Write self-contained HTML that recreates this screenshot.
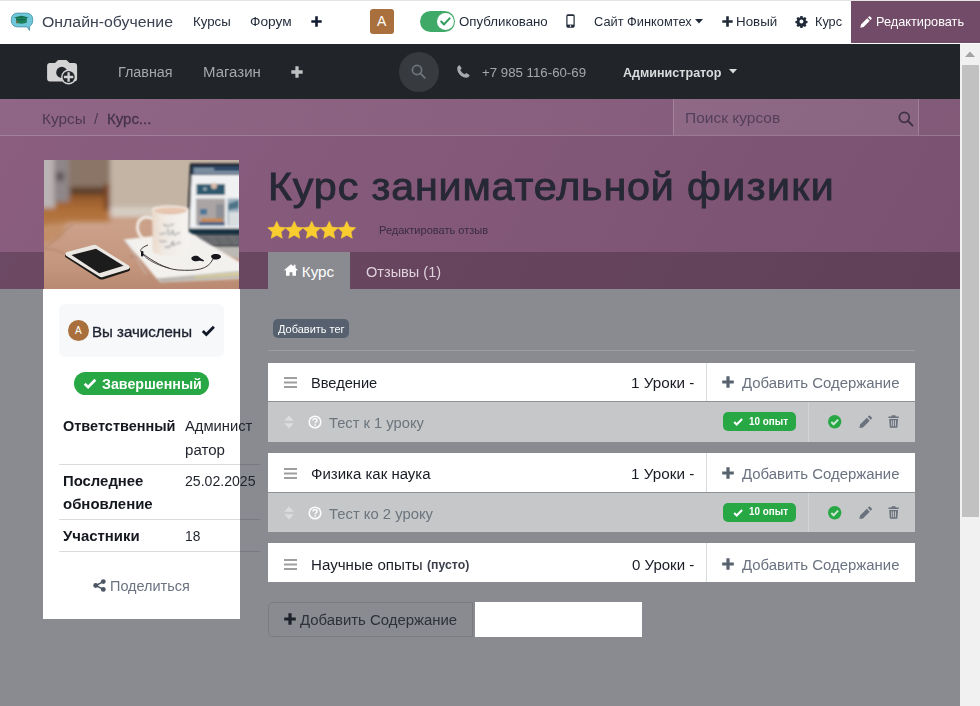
<!DOCTYPE html>
<html lang="ru">
<head>
<meta charset="utf-8">
<title>Курс занимательной физики</title>
<style>
*{box-sizing:border-box;margin:0;padding:0}
html,body{width:980px;height:706px;overflow:hidden;background:#898b91;font-family:"Liberation Sans",sans-serif;}
#root{position:relative;width:980px;height:706px;overflow:hidden;background:#898b91}
.abs{position:absolute}
.t{position:absolute;white-space:nowrap;line-height:1;}
svg{position:absolute;display:block;overflow:visible}
/* top bar */
#topbar{position:absolute;left:0;top:0;width:980px;height:44px;background:#fff;border-top:1px solid #e3e3e3}
#editbtn{position:absolute;left:851px;top:1px;width:129px;height:42px;background:#714b67}
/* dark nav */
#nav{position:absolute;left:0;top:44px;width:960px;height:55px;background:#212529}
/* scrollbar */
#sb{position:absolute;left:960px;top:44px;width:20px;height:662px;background:#f1f1f1}
#sbthumb{position:absolute;left:2px;top:21px;width:16.600px;height:452px;background:#c1c1c1}
/* header */
#hdr{position:absolute;left:0;top:99px;width:960px;height:190px;background:linear-gradient(120deg,#8b5e80 0%,#7a5170 100%)}
#crumb{position:absolute;left:0;top:0;width:960px;height:37px;background:rgba(255,255,255,.05);border-bottom:1px solid rgba(255,255,255,.18)}
#search{position:absolute;left:673px;top:0;width:246px;height:36px;background:rgba(255,255,255,.07);border-left:1px solid rgba(255,255,255,.18);border-right:1px solid rgba(255,255,255,.18)}
#tabs{position:absolute;left:0;top:153px;width:960px;height:37px;background:rgba(0,0,0,.21)}
#tab1{position:absolute;left:268px;top:0;width:82px;height:37px;background:#898b91}
/* sidebar */
#side{position:absolute;left:43px;top:289px;width:197px;height:330px;background:#fff}
</style>
</head>
<body>
<div id="root">
  <div id="topbar"></div>
  <div id="editbtn"></div>
  <!-- elearning app icon -->
  <svg style="left:11px;top:12px" width="23" height="20" viewBox="0 0 23 20">
    <path d="M6.200 1.100h9.600a5.900 5.900 0 0 1 5.900 5.900v2a5.900 5.900 0 0 1-2.900 5.100l-.400 4.400-2.100-3.600h-10.100a5.900 5.900 0 0 1-5.900-5.900v-2a5.900 5.900 0 0 1 5.900-5.900z" fill="#6fc7da" stroke="#468fa3" stroke-width=".800"/>
    <path d="M10.400 3.700l7.600 1.700-7.600 1.700-7.600-1.700z" fill="#12704c"/>
    <path d="M5.100 6.300l5.300 1 5.400-1v4.300c-1.500 1.500-9.200 1.500-10.700 0z" fill="#1c8159"/>
    <path d="M5.100 6.300l5.300 1 5.400-1v1.300l-5.400 1-5.300-1z" fill="#10694a"/>
    <rect x="5.200" y="8.800" width="1.800" height="2.400" fill="#7a6a3c"/>
  </svg>
  <div class="t" id="t_brand" style="left:41.80px;top:13.63px;font-size:15.2px;color:#3b4252;letter-spacing:0px;transform-origin:0 0;transform:scaleX(1.0440)">Онлайн-обучение</div>
  <div class="t" id="t_kursy" style="left:193.20px;top:14.83px;font-size:13.2px;color:#1f2937;letter-spacing:0px;transform-origin:0 0;transform:scaleX(1.0039)">Курсы</div>
  <div class="t" id="t_forum" style="left:249.80px;top:14.83px;font-size:13.2px;color:#1f2937;letter-spacing:0px;transform-origin:0 0;transform:scaleX(1.0386)">Форум</div>
  <svg style="left:311px;top:16px" width="11" height="11" viewBox="0 0 11 11"><path d="M4.200 0.300h2.600v3.900h3.900v2.600h-3.900v3.900h-2.600v-3.900h-3.900v-2.600h3.900z" fill="#111c33"/></svg>
  <div class="abs" style="left:370px;top:9px;width:24px;height:24.500px;border-radius:3px;background:#a9703d"></div>
  <div class="t" id="t_avA" style="left:377px;top:14px;font-size:14px;color:#fff">A</div>
  <div class="abs" style="left:420px;top:11px;width:35px;height:21px;border-radius:11px;background:#3fa968"></div>
  <div class="abs" style="left:437px;top:13px;width:17px;height:17px;border-radius:9px;background:#fff"></div>
  <svg style="left:440px;top:17px" width="11" height="9" viewBox="0 0 11 9"><path d="M1.200 4.600l2.800 2.800 5.600-6" fill="none" stroke="#2f9e5f" stroke-width="2.100" stroke-linecap="round" stroke-linejoin="round"/></svg>
  <div class="t" id="t_pub" style="left:459.20px;top:14.83px;font-size:13.2px;color:#1f2937;letter-spacing:0px;transform-origin:0 0;transform:scaleX(1.0057)">Опубликовано</div>
  <svg style="left:566px;top:14px" width="9" height="14" viewBox="0 0 9 14"><rect x="0.300" y="0.300" width="8.400" height="13.400" rx="1.600" fill="#1f2937"/><rect x="1.500" y="2" width="6" height="8.600" fill="#fff"/><circle cx="4.500" cy="12.100" r="0.800" fill="#fff"/></svg>
  <div class="t" id="t_site" style="left:593.80px;top:14.83px;font-size:13.2px;color:#1f2937;letter-spacing:0px;transform-origin:0 0;transform:scaleX(0.9718)">Сайт Финкомтех</div>
  <svg style="left:695px;top:19px" width="8" height="5" viewBox="0 0 8 5"><path d="M0 0h8l-4 4.600z" fill="#1f2937"/></svg>
  <svg style="left:722px;top:16px" width="11" height="11" viewBox="0 0 11 11"><path d="M4.200 0.300h2.600v3.900h3.900v2.600h-3.900v3.900h-2.600v-3.900h-3.900v-2.600h3.900z" fill="#1f2937"/></svg>
  <div class="t" id="t_new" style="left:735.80px;top:14.83px;font-size:13.2px;color:#1f2937;letter-spacing:0px;transform-origin:0 0;transform:scaleX(1.0130)">Новый</div>
  <svg style="left:796.300px;top:16.200px" width="10.900" height="10.900" viewBox="0 0 24 24"><path fill="#1f2937" fill-rule="evenodd" d="M9.600 0h4.800l.6 3.300 1.900.8 2.800-1.900 3.400 3.400-1.900 2.800.8 1.900 3.300.6v4.800l-3.300.6-.8 1.900 1.900 2.800-3.400 3.400-2.800-1.900-1.900.8-.6 3.300h-4.800l-.6-3.300-1.900-.8-2.800 1.900-3.400-3.400 1.900-2.800-.8-1.900-3.300-.6v-4.800l3.300-.6.8-1.900-1.900-2.800 3.400-3.400 2.800 1.900 1.900-.8zM12 7.600a4.400 4.400 0 1 0 0 8.800 4.400 4.400 0 0 0 0-8.800z"/></svg>
  <div class="t" id="t_kurs" style="left:814.80px;top:14.83px;font-size:13.2px;color:#1f2937;letter-spacing:0px;transform-origin:0 0;transform:scaleX(0.9643)">Курс</div>
  <svg style="left:860px;top:15.500px" width="12" height="12" viewBox="0 0 13 13"><path d="M0.300 12.700l0.800-3.600 6.700-6.700 2.800 2.800-6.700 6.700zM8.700 1.500l1-1a0.900 0.900 0 0 1 1.200 0l1.600 1.600a0.900 0.900 0 0 1 0 1.200l-1 1z" fill="#fff"/></svg>
  <div class="t" id="t_edit" style="left:875.80px;top:14.83px;font-size:13.2px;color:#fff;letter-spacing:0px;transform-origin:0 0;transform:scaleX(0.9671)">Редактировать</div>
  <div id="nav"></div>
  <!-- camera logo -->
  <svg style="left:47px;top:60px" width="31" height="26" viewBox="0 0 31 26">
    <path d="M3 3h5l2.600-2.600a1.400 1.400 0 0 1 1-.4h7.400a1.400 1.400 0 0 1 1 .4l2.600 2.600h4.600a2.900 2.900 0 0 1 2.900 2.900v12.700a2.900 2.900 0 0 1-2.900 2.900h-24.200a2.900 2.900 0 0 1-2.900-2.900v-12.700a2.900 2.900 0 0 1 2.900-2.900z" fill="#d3d3d4"/>
    <circle cx="14.800" cy="12.400" r="5.600" fill="#212529"/>
    <circle cx="21.600" cy="17" r="7.500" fill="#d3d3d4"/>
    <circle cx="21.600" cy="17" r="6.100" fill="#212529"/>
    <path d="M21.600 12.300v9.400M16.900 17h9.400" stroke="#d3d3d4" stroke-width="2.300" fill="none"/>
  </svg>
  <div class="t" id="t_home" style="left:117.80px;top:63.63px;font-size:15.2px;color:#a4a7ab;letter-spacing:0px;transform-origin:0 0;transform:scaleX(0.9429)">Главная</div>
  <div class="t" id="t_shop" style="left:203.20px;top:63.63px;font-size:15.2px;color:#a4a7ab;letter-spacing:0px;transform-origin:0 0;transform:scaleX(0.9861)">Магазин</div>
  <svg style="left:291px;top:66px" width="12" height="12" viewBox="0 0 11 11"><path d="M4 0.300h3v3.700h3.700v3h-3.700v3.700h-3v-3.700h-3.700v-3h3.700z" fill="#bfc1c3"/></svg>
  <div class="abs" style="left:399px;top:51.500px;width:40px;height:40px;border-radius:20px;background:#373b40"></div>
  <svg style="left:411px;top:64px" width="15" height="15" viewBox="0 0 15 15"><circle cx="6" cy="6" r="4.600" fill="none" stroke="#6f747a" stroke-width="1.700"/><path d="M9.400 9.400l4.400 4.400" stroke="#6f747a" stroke-width="1.900" stroke-linecap="round"/></svg>
  <svg style="left:457px;top:65px" width="13" height="13" viewBox="0 0 13 13"><path d="M2.600 0.300l2.100 2.900-1.400 1.700c.9 1.900 2.300 3.300 4.400 4.400l1.700-1.400 2.900 2.100c.3.300.3.700.1 1-0.700 1-1.700 1.700-2.900 1.700-4.700 0-9.300-4.600-9.300-9.300 0-1.200.7-2.200 1.700-2.900.2-.2.500-.3.700-.2z" fill="#a8abae"/></svg>
  <div class="t" id="t_phone" style="left:482.20px;top:65.83px;font-size:13.2px;color:#a4a7ab;letter-spacing:0px;transform-origin:0 0;transform:scaleX(1.0050)">+7 985 116-60-69</div>
  <div class="t" id="t_admin" style="left:622.60px;top:66.00px;font-size:13px;font-weight:bold;color:#d9dbdd;letter-spacing:0px;transform-origin:0 0;transform:scaleX(0.9657)">Администратор</div>
  <svg style="left:729px;top:69px" width="8" height="5" viewBox="0 0 8 5"><path d="M0 0h8l-4 4.400z" fill="#d9dbdd"/></svg>
  <div id="sb"><div id="sbthumb"></div><svg style="left:5px;top:7px" width="10" height="6" viewBox="0 0 10 6"><path d="M0 6l5-5.600 5 5.600z" fill="#a3a3a3"/></svg></div>
  <div id="hdr">
    <div id="crumb"></div>
    <div id="search"></div>
    <div id="tabs"><div id="tab1"></div></div>
  </div>
  <div class="t" id="t_bc1" style="left:41.80px;top:110.63px;font-size:15.2px;color:#4d3a50;letter-spacing:0px;transform-origin:0 0;transform:scaleX(1.0135)">Курсы</div>
  <div class="t" id="t_bc2" style="left:93.60px;top:110.63px;font-size:15.2px;color:#4d3a50;letter-spacing:0px;transform-origin:0 0;transform:scaleX(0.9938)">/</div>
  <div class="t" id="t_bc3" style="-webkit-text-stroke:0.300px #45334a;left:106.80px;top:110.63px;font-size:15.2px;color:#45334a;letter-spacing:0px;transform-origin:0 0;transform:scaleX(0.9886)">Курс...</div>
  <div class="t" id="t_srch" style="left:684.60px;top:110.43px;font-size:15.2px;color:#543f5a;letter-spacing:0px;transform-origin:0 0;transform:scaleX(1.0202)">Поиск курсов</div>
  <svg style="left:898px;top:111px" width="16" height="16" viewBox="0 0 16 16"><circle cx="6.300" cy="6.300" r="5" fill="none" stroke="#3e3045" stroke-width="1.700"/><path d="M10 10l4.600 4.600" stroke="#3e3045" stroke-width="1.900" stroke-linecap="round"/></svg>
  <div class="t" id="t_title" style="-webkit-text-stroke:0.850px #262835;paint-order:stroke fill;left:267.80px;top:167.36px;font-size:39.5px;color:#262835;letter-spacing:0.8px;transform-origin:0 0;transform:scaleX(1.0443)">Курс занимательной</div>
  <div class="t" id="t_title2" style="-webkit-text-stroke:0.850px #262835;paint-order:stroke fill;left:686.80px;top:167.36px;font-size:39.5px;color:#262835;letter-spacing:1.4px;transform-origin:0 0;transform:scaleX(1.0399)">физики</div>
  <svg id="stars" style="left:268px;top:221px" width="88" height="18" viewBox="0 0 88 18">
    <defs><path id="st" d="M8.75 0.30L11.40 6.06L17.69 6.80L13.03 11.09L14.28 17.30L8.75 14.20L3.22 17.30L4.47 11.09L-0.19 6.80L6.10 6.06z" stroke-linejoin="round"/></defs>
    <use href="#st" x="0" fill="#f9cc30" stroke="#f9cc30" stroke-width=".600"/><use href="#st" x="17.500" fill="#f9cc30" stroke="#f9cc30" stroke-width=".600"/><use href="#st" x="35" fill="#f9cc30" stroke="#f9cc30" stroke-width=".600"/><use href="#st" x="52.500" fill="#f9cc30" stroke="#f9cc30" stroke-width=".600"/><use href="#st" x="70" fill="#f9cc30" stroke="#f9cc30" stroke-width=".600"/>
  </svg>
  <div class="t" id="t_rev" style="left:378.80px;top:224.56px;font-size:11.15px;color:#3a2d40;letter-spacing:0px;transform-origin:0 0;transform:scaleX(0.9907)">Редактировать отзыв</div>
  <svg style="left:284px;top:264px" width="14" height="12" viewBox="0 0 14 12"><path d="M7 0.200l-6.800 5.700.8.900 1-.8v5.800h3.600v-3.600h2.800v3.600h3.600v-5.800l1 .8.800-.9-2.300-1.900v-3.200h-1.800v1.700z" fill="#fff"/></svg>
  <div class="t" id="t_tab1" style="left:301.80px;top:263.63px;font-size:15.2px;color:#fff;letter-spacing:0px;transform-origin:0 0;transform:scaleX(1.0000)">Курс</div>
  <div class="t" id="t_tab2" style="left:365.60px;top:263.63px;font-size:15.2px;color:#dfd2dc;letter-spacing:0px;transform-origin:0 0;transform:scaleX(0.9573)">Отзывы (1)</div>
  <div id="side"></div>
  <!-- course image -->
  <svg id="photo" style="left:44px;top:160px" width="195" height="129" viewBox="0 0 195 129">
    <defs>
      <filter id="b1" x="-10%" y="-10%" width="120%" height="120%"><feGaussianBlur stdDeviation="2.400"/></filter>
      <filter id="b2" x="-10%" y="-10%" width="120%" height="120%"><feGaussianBlur stdDeviation="0.800"/></filter>
      <filter id="b3" x="-10%" y="-10%" width="120%" height="120%"><feGaussianBlur stdDeviation="0.400"/></filter>
      <filter id="b4" x="-10%" y="-10%" width="120%" height="120%"><feGaussianBlur stdDeviation="1.300"/></filter>
      <clipPath id="pc"><rect x="0" y="0" width="195" height="129"/></clipPath>
      <linearGradient id="blk" x1="0" y1="0" x2="0" y2="1"><stop offset="0" stop-color="#cca28a"/><stop offset=".55" stop-color="#c4967e"/><stop offset="1" stop-color="#b4846b"/></linearGradient>
      <linearGradient id="mug" x1="0" y1="0" x2="1" y2="0"><stop offset="0" stop-color="#ead9ca"/><stop offset=".3" stop-color="#f0e9e2"/><stop offset="1" stop-color="#f5f3f1"/></linearGradient>
      <linearGradient id="flr" x1="0" y1="0" x2="0" y2="1"><stop offset="0" stop-color="#8f552a"/><stop offset=".4" stop-color="#ad6c35"/><stop offset="1" stop-color="#b9804f"/></linearGradient>
    </defs>
    <g clip-path="url(#pc)">
      <rect x="0" y="0" width="195" height="129" fill="#c4b5a5"/>
      <!-- blurred background -->
      <g filter="url(#b1)">
        <rect x="24" y="-6" width="44" height="40" fill="#8a7566"/>
        <rect x="26" y="27" width="36" height="9" fill="#5f402a"/>
        <path d="M-6 44l32-9h42v34h-74z" fill="url(#flr)"/>
        <rect x="-6" y="-6" width="17" height="54" fill="#bab4b4"/>
        <rect x="10" y="-6" width="15" height="48" fill="#8e8688"/>
        <rect x="12" y="12" width="8" height="9" fill="#5e5558"/>
        <rect x="60" y="24" width="6" height="26" fill="#7a4523"/>
        <rect x="66" y="-6" width="140" height="56" fill="#c3b4a4"/>
        <rect x="66" y="47" width="60" height="11" fill="#d6cdc3"/>
        <rect x="66" y="57" width="50" height="10" fill="#c89c83"/>
      </g>
      <!-- blanket -->
      <g filter="url(#b1)">
        <path d="M-8 68l34-6 76 0 102 8v70h-212z" fill="url(#blk)"/>
        <path d="M-6 66l30-4-8 16-22 8z" fill="#bf8a5e" opacity=".750"/>
      </g>
      <g filter="url(#b2)" fill="none" stroke="#a4745c" stroke-width="0.900" opacity=".800">
        <path d="M0 89l29-25"/><path d="M0 89c8 0 14 1 21 5"/><path d="M86 96l12 2"/>
      </g>
      <!-- laptop -->
      <g filter="url(#b2)">
        <path d="M146 3.500h52v72h-55.500z" fill="#16191f"/>
        <path d="M148 6h50v9h-50.400z" fill="#2e4a66"/>
        <path d="M150 8.500h20v1.600h-20zM150 11.500h46v1.400h-46z" fill="#a9bccb"/>
        <path d="M147.600 15h50.400v55h-52.800z" fill="#f0f1f2"/>
        <rect x="152.500" y="24" width="28.500" height="11" fill="#2f596d"/>
        <circle cx="170" cy="26" r="3" fill="#d9b9a8"/>
        <circle cx="161" cy="29" r="1.800" fill="#9fb3b8"/>
        <rect x="152" y="38.500" width="29" height="27" fill="#aaa5a4"/>
        <rect x="156" y="49" width="7" height="5.500" fill="#4a7597"/>
        <rect x="172" y="44" width="8" height="16" fill="#8d8f97"/>
        <rect x="157" y="58.500" width="22" height="4" fill="#c98a52"/>
        <rect x="155" y="62" width="26" height="3.500" fill="#3f5f86"/>
        <rect x="183.500" y="38.500" width="12" height="27" fill="#9bb0bd"/>
        <path d="M184 44l11-4v8l-11 2z" fill="#4e7388"/>
        <path d="M185 52h10v13h-10z" fill="#d9dde0"/>
        <path d="M145 68.500h53v6.500h-53.800z" fill="#173242"/>
        <path d="M150 75h48v13h-40z" fill="#b3b4b6"/>
        <path d="M152 75.500h46v11h-40z" fill="#25282e"/>
        <path d="M154 77.500h44M156 80.500h42M158 83.500h40" stroke="#d5d7da" stroke-width="1.300" stroke-dasharray="1.800 1.500" fill="none"/>
        <path d="M164 87h34v13l-26-8z" fill="#bcb9b5"/>
      </g>
      <!-- notebook/papers -->
      <g filter="url(#b2)">
        <path d="M80 80.500l17-2 48-5.500 53 32v14l-82 3.500-14-17z" fill="#cfc9c2"/>
        <path d="M150 116l48-3.500v3l-46 3z" fill="#e2d9a0"/>
        <path d="M117 120.500l81-5" stroke="#8a8780" stroke-width="0.700" fill="none"/>
        <path d="M80 79.500l17-2 48-5.500 53 31.500v8l-85 7.500-14-17z" fill="#f3f1ee"/>
        <path d="M82 81l20 33" stroke="#cfccd0" stroke-width="1.600" stroke-dasharray="0.800 1.200" fill="none"/>
        <path d="M113 119l85-7.500" stroke="#9a968f" stroke-width="0.800" fill="none"/>
      </g>
      <!-- mug -->
      <g filter="url(#b2)">
        <path d="M109 59c-7-4-15.500-1-15.500 8 0 9 7.500 15 16.500 19" fill="none" stroke="#f3eee8" stroke-width="2.800"/>
        <path d="M108 49.500h37l-.6 42.500c-7 5.500-28 5.500-35.600 0z" fill="url(#mug)"/>
        <ellipse cx="126.500" cy="49.500" rx="18.600" ry="4" fill="#f3ebe3"/>
        <ellipse cx="126.500" cy="50.300" rx="16.800" ry="3" fill="#e8c6b0"/>
        <path d="M110.500 51c6 2.600 26 2.600 32 0-6 4-26 4-32 0z" fill="#d9a98c"/>
        <g stroke="#737b85" stroke-width="1" fill="none" stroke-linecap="round">
          <path d="M119.500 64.500c.5-3 1.500 4 2.500 1.500s2 2 3.500-.5 2.500 1.500 4-1.500"/>
          <path d="M115.500 73.500c1-2 1.500 3 3 .5s2-1 3 .5M124 69c-.5 3 .2 6 1.200 6M127 74.500c1-4 2-6 2.500-2s1.500 3 3 1.500 2-1 3-1"/>
          <path d="M115.500 80.500c1.500-1 2.500 4 3.500 1s2 1.500 3.500 0M126.500 86c2-3 3-7 2.500-3s2 2 3.500.5 2.500 1 4-1M121 87h5"/>
        </g>
      </g>
      <!-- earphones -->
      <g filter="url(#b3)">
        <path d="M104 85c-8 3-9 6-5 9 10 7 22 15 35 16 18 1 30 0 35-11" fill="none" stroke="#2a2426" stroke-width="0.900"/>
        <path d="M99 94c2 5 16 12 26 14" fill="none" stroke="#3a3234" stroke-width="0.800"/>
        <path d="M147.500 97.500c2-2.200 6-2.400 7.600-.6 1 1.200 4 2.800 5 3.600l-.8.900c-2-.9-3.600-.8-5.600-.3-3 .8-7-.6-6.200-3.600z" fill="#17181c"/>
        <path d="M167.500 95.200c2.400-1.800 7.800-1.400 9.300.7.900 1.700-2.200 3.600-5.200 3.700-2.600.1-5.500-2.400-4.100-4.400z" fill="#17181c"/>
        <rect x="97" y="91" width="2.400" height="5.600" rx="1" fill="#17181c"/>
      </g>
      <!-- phone -->
      <g filter="url(#b3)">
        <path d="M22.500 93.500l26.500-7.200a4.500 4.500 0 0 1 3.500.5l32.500 20.400a2.200 2.200 0 0 1-.5 4l-25.500 8.200a4.500 4.500 0 0 1-3.600-.4l-33.400-21.400a2.300 2.300 0 0 1 .5-4.100z" fill="#1f1a19"/>
        <path d="M23 92l26.200-7a4.500 4.500 0 0 1 3.500.5l32 20a2 2 0 0 1-.5 3.700l-25.300 7.800a4.500 4.500 0 0 1-3.600-.4l-32.800-20.600a2.200 2.200 0 0 1 .5-4z" fill="#ebe8e4"/>
        <path d="M27.500 95l24.500-6.300 27.500 17-24.300 7.500z" fill="#1d1b1c"/>
      </g>
    </g>
  </svg>
  <!-- sidebar content -->
  <div class="abs" style="left:59px;top:304px;width:165px;height:53px;border-radius:6px;background:#f7f8fa"></div>
  <div class="abs" style="left:68px;top:320px;width:21px;height:21px;border-radius:11px;background:#a9703d"></div>
  <div class="t" id="t_avA2" style="left:75px;top:326px;font-size:10px;color:#fff">A</div>
  <div class="t" id="t_enr" style="left:91.80px;top:324.13px;font-size:15.2px;color:#1e2330;-webkit-text-stroke:0.350px #1e2330;letter-spacing:0px;transform-origin:0 0;transform:scaleX(0.9900)">Вы зачислены</div>
  <svg style="left:201.300px;top:325.300px" width="14.700" height="11.500" viewBox="0 0 14 11"><path d="M1.700 5.700l3.400 3.400 7.200-7.400" fill="none" stroke="#111827" stroke-width="2.700" stroke-linejoin="miter"/></svg>
  <div class="abs" style="left:74px;top:372px;width:135px;height:23px;border-radius:12px;background:#28a745"></div>
  <svg style="left:83px;top:378px" width="14" height="11" viewBox="0 0 14 11"><path d="M1.700 5.700l3.400 3.400 7.200-7.400" fill="none" stroke="#fff" stroke-width="2.700"/></svg>
  <div class="t" id="t_done" style="left:101.80px;top:376.30px;font-size:15px;font-weight:bold;color:#fff;letter-spacing:0px;transform-origin:0 0;transform:scaleX(0.9483)">Завершенный</div>
  <div class="t" id="t_resp" style="left:63.40px;top:418.30px;font-size:15px;font-weight:bold;color:#14171e;letter-spacing:0px;transform-origin:0 0;transform:scaleX(0.9655)">Ответственный</div>
  <div class="t" id="t_adm1" style="left:184.60px;top:418.13px;font-size:15.2px;color:#1f232c;letter-spacing:0px;transform-origin:0 0;transform:scaleX(0.9718)">Админист</div>
  <div class="t" id="t_adm2" style="left:184.80px;top:441.63px;font-size:15.2px;color:#1f232c;letter-spacing:0px;transform-origin:0 0;transform:scaleX(0.9929)">ратор</div>
  <div class="abs" style="left:59px;top:464px;width:201px;height:1px;background:rgba(40,44,52,.170)"></div>
  <div class="t" id="t_last1" style="left:63.40px;top:472.80px;font-size:15px;font-weight:bold;color:#14171e;letter-spacing:0px;transform-origin:0 0;transform:scaleX(0.9916)">Последнее</div>
  <div class="t" id="t_last2" style="left:63.40px;top:495.80px;font-size:15px;font-weight:bold;color:#14171e;letter-spacing:0px;transform-origin:0 0;transform:scaleX(0.9967)">обновление</div>
  <div class="t" id="t_date" style="left:185.00px;top:472.63px;font-size:15.2px;color:#1f232c;letter-spacing:0px;transform-origin:0 0;transform:scaleX(0.9273)">25.02.2025</div>
  <div class="abs" style="left:59px;top:519px;width:201px;height:1px;background:rgba(40,44,52,.170)"></div>
  <div class="t" id="t_part" style="left:63.40px;top:528.30px;font-size:15px;font-weight:bold;color:#14171e;letter-spacing:0px;transform-origin:0 0;transform:scaleX(0.9948)">Участники</div>
  <div class="t" id="t_18" style="left:185.40px;top:528.13px;font-size:15.2px;color:#1f232c;letter-spacing:0px;transform-origin:0 0;transform:scaleX(0.9073)">18</div>
  <div class="abs" style="left:59px;top:551px;width:201px;height:1px;background:rgba(40,44,52,.170)"></div>
  <svg style="left:93px;top:579px" width="13" height="13" viewBox="0 0 13 13"><path d="M10.300 2.600l-7.400 3.900 7.400 3.900" fill="none" stroke="#4b5563" stroke-width="1.500"/><circle cx="10.300" cy="2.600" r="2.400" fill="#4b5563"/><circle cx="2.700" cy="6.500" r="2.400" fill="#4b5563"/><circle cx="10.300" cy="10.400" r="2.400" fill="#4b5563"/></svg>
  <div class="t" id="t_share" style="left:109.80px;top:578.13px;font-size:15.2px;color:#6b7280;letter-spacing:0px;transform-origin:0 0;transform:scaleX(0.9512)">Поделиться</div>
  <!-- main column -->
  <div class="abs" style="left:272.500px;top:318.500px;width:76.500px;height:19.500px;border-radius:5px;background:#56606e"></div>
  <div class="t" id="t_tag" style="left:277.80px;top:323.56px;font-size:11.15px;color:#fff;letter-spacing:0px;transform-origin:0 0;transform:scaleX(0.9855)">Добавить тег</div>
  <div class="abs" style="left:268px;top:350px;width:647px;height:1px;background:#9c9ea3"></div>
  <div class="abs" style="left:268px;top:363px;width:647px;height:38px;background:#fff"></div>
  <svg style="left:284px;top:377px" width="13" height="11" viewBox="0 0 13 11"><path d="M0 1h13M0 5.500h13M0 10h13" stroke="#9f9f9f" stroke-width="2.200" fill="none"/></svg>
  <div class="t" id="t_s1" style="left:310.80px;top:375.13px;font-size:15.2px;color:#1a1d25;letter-spacing:0px;transform-origin:0 0;transform:scaleX(0.9634)">Введение</div>
  <div class="t" id="t_c1" style="left:630.80px;top:375.13px;font-size:15.2px;color:#1a1d25;letter-spacing:0px;transform-origin:0 0;transform:scaleX(1.0048)">1 Уроки -</div>
  <div class="abs" style="left:706px;top:363px;width:1px;height:38px;background:#d9dcdf"></div>
  <svg style="left:722px;top:376px" width="12" height="12" viewBox="0 0 12 12"><path d="M4.400 0.200h3.200v4.200h4.200v3.200h-4.200v4.200h-3.200v-4.200h-4.200v-3.200h4.200z" fill="#59626f"/></svg>
  <div class="t" id="t_a1" style="left:741.80px;top:375.13px;font-size:15.2px;color:#6b7280;letter-spacing:0px;transform-origin:0 0;transform:scaleX(0.9837)">Добавить Содержание</div>
  <div class="abs" style="left:268px;top:401px;width:647px;height:41px;background:#c5c7c9;border-top:1px solid #8f9194"></div>
  <svg style="left:283.500px;top:414.8px" width="10" height="14" viewBox="0 0 10 14"><path d="M0.200 5.800l4.800-5.400 4.800 5.400zM0.200 8.200l4.800 5.400 4.800-5.400z" fill="#dcddde"/></svg>
  <svg style="left:307.500px;top:414.8px" width="14" height="14" viewBox="0 0 14 14"><circle cx="7" cy="7" r="5.800" fill="none" stroke="#fcfcfc" stroke-width="1.600"/><path d="M5 5.600c0-1.300.9-2 2-2s2 .7 2 1.800c0 1.300-1.800 1.400-1.800 2.800" fill="none" stroke="#fcfcfc" stroke-width="1.500"/><rect x="6.400" y="9.200" width="1.500" height="1.500" fill="#fcfcfc"/></svg>
  <div class="t" id="t_l1" style="left:328.80px;top:414.63px;font-size:15.2px;color:#6c757d;letter-spacing:0px;transform-origin:0 0;transform:scaleX(0.9694)">Тест к 1 уроку</div>
  <div class="abs" style="left:723px;top:411.8px;width:73px;height:19.200px;border-radius:5px;background:#28a745"></div>
  <svg style="left:732.500px;top:417.5px" width="10.500" height="8" viewBox="0 0 10.500 8"><path d="M1.200 4l2.500 2.500 5.400-5.400" fill="none" stroke="#fff" stroke-width="2.100"/></svg>
  <div class="t" id="t_b1" style="left:748.80px;top:415.76px;font-size:11.15px;font-weight:bold;color:#fff;letter-spacing:0px;transform-origin:0 0;transform:scaleX(0.8864)">10 опыт</div>
  <div class="abs" style="left:807.500px;top:402px;width:1px;height:40px;background:#d2d4d6"></div>
  <svg style="left:827.500px;top:414.9px" width="13.400" height="13.400" viewBox="0 0 14 14"><circle cx="7" cy="7" r="7" fill="#28a745"/><path d="M3.500 7.300l2.400 2.400 4.700-4.900" fill="none" stroke="#cfe6d3" stroke-width="2"/></svg>
  <svg style="left:859px;top:414.9px" width="13.500" height="13.500" viewBox="0 0 14 14"><path d="M0.400 13.600l.7-3.700 7-7 3 3-7 7zM9.100 1.900l1.100-1.100a1 1 0 0 1 1.300 0l1.700 1.700a1 1 0 0 1 0 1.300l-1.100 1.100z" fill="#6a727d"/></svg>
  <svg style="left:888px;top:414.7px" width="11.200" height="13.200" viewBox="0 0 12 14"><path d="M4.200 0.300h3.600l.6 1.300h3.100v1.500h-11v-1.500h3.100zM1.300 4.100h9.400l-.6 8.600a1.100 1.100 0 0 1-1.100 1h-6a1.100 1.100 0 0 1-1.100-1zM3.500 5.600v6.300h1v-6.300zM5.500 5.600v6.300h1v-6.300zM7.500 5.600v6.300h1v-6.300z" fill="#6a727d" fill-rule="evenodd"/></svg>
  <div class="abs" style="left:268px;top:453px;width:647px;height:39px;background:#fff"></div>
  <svg style="left:284px;top:468px" width="13" height="11" viewBox="0 0 13 11"><path d="M0 1h13M0 5.500h13M0 10h13" stroke="#9f9f9f" stroke-width="2.200" fill="none"/></svg>
  <div class="t" id="t_s2" style="left:310.80px;top:466.13px;font-size:15.2px;color:#1a1d25;letter-spacing:0px;transform-origin:0 0;transform:scaleX(0.9876)">Физика как наука</div>
  <div class="t" id="t_c2" style="left:630.80px;top:466.13px;font-size:15.2px;color:#1a1d25;letter-spacing:0px;transform-origin:0 0;transform:scaleX(1.0048)">1 Уроки -</div>
  <div class="abs" style="left:706px;top:453px;width:1px;height:39px;background:#d9dcdf"></div>
  <svg style="left:722px;top:467px" width="12" height="12" viewBox="0 0 12 12"><path d="M4.400 0.200h3.200v4.200h4.200v3.200h-4.200v4.200h-3.200v-4.200h-4.200v-3.200h4.200z" fill="#59626f"/></svg>
  <div class="t" id="t_a2" style="left:741.80px;top:466.13px;font-size:15.2px;color:#6b7280;letter-spacing:0px;transform-origin:0 0;transform:scaleX(0.9837)">Добавить Содержание</div>
  <div class="abs" style="left:268px;top:492px;width:647px;height:40px;background:#c5c7c9;border-top:1px solid #8f9194"></div>
  <svg style="left:283.500px;top:506.3px" width="10" height="14" viewBox="0 0 10 14"><path d="M0.200 5.800l4.800-5.400 4.800 5.400zM0.200 8.200l4.800 5.400 4.800-5.400z" fill="#dcddde"/></svg>
  <svg style="left:307.500px;top:506.3px" width="14" height="14" viewBox="0 0 14 14"><circle cx="7" cy="7" r="5.800" fill="none" stroke="#fcfcfc" stroke-width="1.600"/><path d="M5 5.600c0-1.300.9-2 2-2s2 .7 2 1.800c0 1.300-1.800 1.400-1.800 2.800" fill="none" stroke="#fcfcfc" stroke-width="1.500"/><rect x="6.400" y="9.200" width="1.500" height="1.500" fill="#fcfcfc"/></svg>
  <div class="t" id="t_l2" style="left:328.80px;top:506.13px;font-size:15.2px;color:#6c757d;letter-spacing:0px;transform-origin:0 0;transform:scaleX(0.9764)">Тест ко 2 уроку</div>
  <div class="abs" style="left:723px;top:503.3px;width:73px;height:19.200px;border-radius:5px;background:#28a745"></div>
  <svg style="left:732.500px;top:509px" width="10.500" height="8" viewBox="0 0 10.500 8"><path d="M1.200 4l2.500 2.500 5.400-5.400" fill="none" stroke="#fff" stroke-width="2.100"/></svg>
  <div class="t" id="t_b2" style="left:748.80px;top:506.26px;font-size:11.15px;font-weight:bold;color:#fff;letter-spacing:0px;transform-origin:0 0;transform:scaleX(0.8864)">10 опыт</div>
  <div class="abs" style="left:807.500px;top:493px;width:1px;height:39px;background:#d2d4d6"></div>
  <svg style="left:827.500px;top:506.4px" width="13.400" height="13.400" viewBox="0 0 14 14"><circle cx="7" cy="7" r="7" fill="#28a745"/><path d="M3.500 7.300l2.400 2.400 4.700-4.900" fill="none" stroke="#cfe6d3" stroke-width="2"/></svg>
  <svg style="left:859px;top:506.4px" width="13.500" height="13.500" viewBox="0 0 14 14"><path d="M0.400 13.600l.7-3.700 7-7 3 3-7 7zM9.100 1.900l1.100-1.100a1 1 0 0 1 1.300 0l1.700 1.700a1 1 0 0 1 0 1.300l-1.100 1.100z" fill="#6a727d"/></svg>
  <svg style="left:888px;top:506.2px" width="11.200" height="13.200" viewBox="0 0 12 14"><path d="M4.200 0.300h3.600l.6 1.300h3.100v1.500h-11v-1.500h3.100zM1.300 4.100h9.400l-.6 8.600a1.100 1.100 0 0 1-1.100 1h-6a1.100 1.100 0 0 1-1.100-1zM3.500 5.600v6.300h1v-6.300zM5.500 5.600v6.300h1v-6.300zM7.500 5.600v6.300h1v-6.300z" fill="#6a727d" fill-rule="evenodd"/></svg>
  <div class="abs" style="left:268px;top:543px;width:647px;height:39px;background:#fff"></div>
  <svg style="left:284px;top:558.5px" width="13" height="11" viewBox="0 0 13 11"><path d="M0 1h13M0 5.500h13M0 10h13" stroke="#9f9f9f" stroke-width="2.200" fill="none"/></svg>
  <div class="t" id="t_s3" style="left:310.80px;top:556.63px;font-size:15.2px;color:#1a1d25;letter-spacing:0px;transform-origin:0 0;transform:scaleX(0.9955)">Научные опыты</div>
  <div class="t" id="t_s3e" style="left:426.80px;top:559.22px;font-size:12.15px;font-weight:bold;color:#3a3f4a;letter-spacing:0px;transform-origin:0 0;transform:scaleX(1.0120)">(пусто)</div>
  <div class="t" id="t_c3" style="left:631.80px;top:556.63px;font-size:15.2px;color:#1a1d25;letter-spacing:0px;transform-origin:0 0;transform:scaleX(0.9889)">0 Уроки -</div>
  <div class="abs" style="left:706px;top:543px;width:1px;height:39px;background:#d9dcdf"></div>
  <svg style="left:722px;top:557.5px" width="12" height="12" viewBox="0 0 12 12"><path d="M4.400 0.200h3.200v4.200h4.200v3.200h-4.200v4.200h-3.200v-4.200h-4.200v-3.200h4.200z" fill="#59626f"/></svg>
  <div class="t" id="t_a3" style="left:741.80px;top:556.63px;font-size:15.2px;color:#6b7280;letter-spacing:0px;transform-origin:0 0;transform:scaleX(0.9837)">Добавить Содержание</div>
  <div class="abs" style="left:268px;top:602px;width:205px;height:35px;border:1px solid #797b81;border-radius:5px 0 0 5px"></div>
  <svg style="left:284px;top:613px" width="12" height="12" viewBox="0 0 12 12"><path d="M4.400 0.200h3.200v4.200h4.200v3.200h-4.200v4.200h-3.200v-4.200h-4.200v-3.200h4.200z" fill="#1d2129"/></svg>
  <div class="t" id="t_addc" style="left:299.80px;top:612.13px;font-size:15.2px;color:#2c313a;letter-spacing:0px;transform-origin:0 0;transform:scaleX(0.9813)">Добавить Содержание</div>
  <div class="abs" style="left:475px;top:602px;width:167px;height:35px;background:#fff"></div>
</div>
</body>
</html>
